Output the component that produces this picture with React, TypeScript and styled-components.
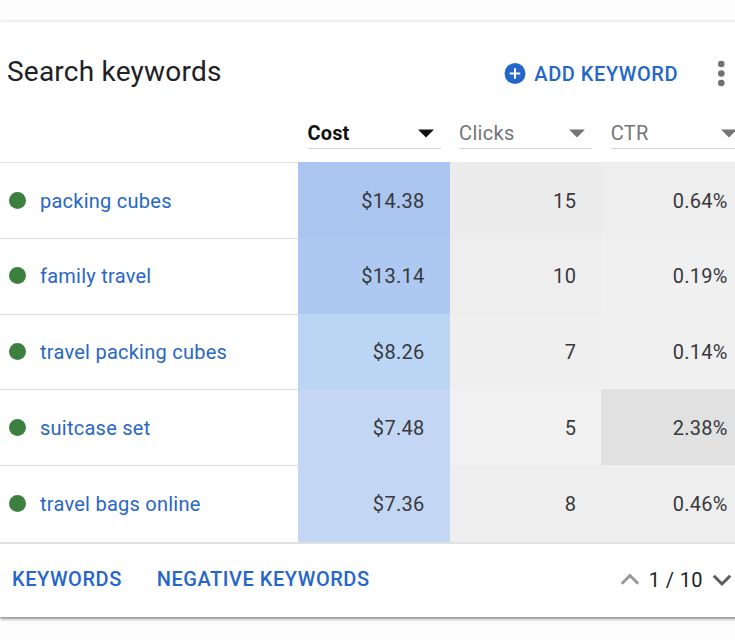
import React from "react";
import styled, { createGlobalStyle } from "styled-components";

const GlobalStyle = createGlobalStyle`
  * { box-sizing: border-box; }
  body { margin: 0; background: #fdfdfd; overflow: hidden; }
`;

const Page = styled.div`
  width: 735px;
  height: 640px;
  padding-top: 22px;
  overflow: hidden;
  font-family: Roboto, "Liberation Sans", sans-serif;
  font-size: 20px;
  letter-spacing: 0.3px;
`;

const Card = styled.section`
  width: 760px;
  height: 595px;
  display: flex;
  flex-direction: column;
  background: #fff;
  box-shadow: 0 0 3px rgba(0, 0, 0, 0.16), 0 2px 3px rgba(0, 0, 0, 0.4);
`;

const Header = styled.header`
  height: 90px;
  flex: none;
  display: flex;
  align-items: center;
  padding: 0 32px 0 7px;
`;

const Title = styled.h2`
  margin: 10px auto 0 0;
  font-size: 28px;
  line-height: 36px;
  font-weight: 400;
  letter-spacing: 0.22px;
  color: #202124;
`;

const TextButton = styled.button`
  border: 0;
  padding: 0;
  background: none;
  display: flex;
  align-items: center;
  font: inherit;
  font-weight: 500;
  line-height: 24px;
  letter-spacing: 0.54px;
  color: #2566ca;
`;

const AddButton = styled(TextButton)`
  margin: 13px 36px 0 0;
  gap: 8px;
`;

const MenuButton = styled(TextButton)`
  margin-top: 13px;
  color: #717171;
`;

const columns = "298px repeat(3, 151.6px)";

const ColumnHeader = styled.div`
  height: 50px;
  flex: none;
  display: grid;
  grid-template-columns: ${columns};
`;

const MetricSelect = styled.div<{ $active?: boolean }>`
  margin: 5px 9px 0 9.5px;
  height: 32px;
  display: flex;
  align-items: center;
  justify-content: space-between;
  padding: 1px 7px 0 0;
  border-bottom: 1px solid #d2d2d2;
  font-weight: ${(p) => (p.$active ? 700 : 400)};
  letter-spacing: ${(p) => (p.$active ? "0.15px" : "0.3px")};
  color: ${(p) => (p.$active ? "#111" : "#757575")};
`;

const Table = styled.div`
  flex: none;
  border-top: 1px solid #dedede;
  border-bottom: 2px solid #dfe0e1;
`;

const Row = styled.div`
  height: 75.8px;
  display: grid;
  grid-template-columns: ${columns};
`;

const KeywordCell = styled.div<{ $first: boolean }>`
  display: flex;
  align-items: center;
  gap: 14.5px;
  padding: 0 0 0.6px 8.5px;
  margin-top: -1px;
  border-top: 1px solid ${(p) => (p.$first ? "transparent" : "#dcdcdc")};
  letter-spacing: 0.25px;
  color: #2866c8;
`;

const StatusDot = styled.span`
  width: 17px;
  height: 17px;
  margin-top: -1px;
  border-radius: 50%;
  background: #3b803f;
`;

const ValueCell = styled.div<{ $fill: string }>`
  display: flex;
  align-items: center;
  justify-content: flex-end;
  padding: 0.4px 25px 0 0;
  margin-top: -1px;
  background: ${(p) => p.$fill};
  color: #37393c;
`;

const Footer = styled.footer`
  flex: 1;
  display: flex;
  align-items: center;
  gap: 35px;
  padding: 0 28px 2px 12px;
`;

const Pager = styled.div`
  margin-left: auto;
  display: flex;
  align-items: center;
  gap: 9px;
  padding-top: 2px;
  letter-spacing: 0.4px;
  color: #1c1c1c;
`;

const Caret = () => (
  <svg width="16" height="9" viewBox="0 0 16 9" fill="currentColor">
    <path d="M0 .5h16L8 8.5z" />
  </svg>
);

const Chevron = ({ up }: { up?: boolean }) => (
  <svg width="20" height="14" viewBox="0 0 20 14" fill="none" stroke={up ? "#999" : "#5c5c5c"} strokeWidth="3">
    <path d={up ? "M1.8 10.7 10 2.5l8.2 8.2" : "M1.8 2.8 10 11l8.2-8.2"} />
  </svg>
);

const rows = [
  { keyword: "packing cubes", cost: "$14.38", clicks: "15", ctr: "0.64%", fills: ["#a9c5f0", "#ececec", "#eeeeee"] },
  { keyword: "family travel", cost: "$13.14", clicks: "10", ctr: "0.19%", fills: ["#adc8f1", "#eeeeee", "#f0f0f0"] },
  { keyword: "travel packing cubes", cost: "$8.26", clicks: "7", ctr: "0.14%", fills: ["#bbd5f5", "#efefef", "#f0f0f0"] },
  { keyword: "suitcase set", cost: "$7.48", clicks: "5", ctr: "2.38%", fills: ["#c3d7f4", "#f1f1f1", "#e1e1e1"] },
  { keyword: "travel bags online", cost: "$7.36", clicks: "8", ctr: "0.46%", fills: ["#c3d7f4", "#eeeeee", "#eeeeee"] },
];

export default function App() {
  return (
    <Page>
      <GlobalStyle />
      <Card>
        <Header>
          <Title>Search keywords</Title>
          <AddButton>
            <svg width="22" height="22" viewBox="0 0 22 22">
              <circle cx="11" cy="10.5" r="10.5" fill="#2566ca" />
              <path d="M11 5.3v10.4M5.8 10.5h10.4" stroke="#fff" strokeWidth="2" />
            </svg>
            ADD KEYWORD
          </AddButton>
          <MenuButton aria-label="More options">
            <svg width="14" height="28" viewBox="0 0 14 28" fill="currentColor">
              <circle cx="7.3" cy="4" r="3.3" />
              <circle cx="7.3" cy="13.5" r="3.3" />
              <circle cx="7.3" cy="23" r="3.3" />
            </svg>
          </MenuButton>
        </Header>
        <ColumnHeader>
          <span />
          <MetricSelect $active>Cost<Caret /></MetricSelect>
          <MetricSelect>Clicks<Caret /></MetricSelect>
          <MetricSelect>CTR<Caret /></MetricSelect>
        </ColumnHeader>
        <Table>
          {rows.map((row, i) => (
            <Row key={row.keyword}>
              <KeywordCell $first={i === 0}>
                <StatusDot />
                {row.keyword}
              </KeywordCell>
              <ValueCell $fill={row.fills[0]}>{row.cost}</ValueCell>
              <ValueCell $fill={row.fills[1]}>{row.clicks}</ValueCell>
              <ValueCell $fill={row.fills[2]}>{row.ctr}</ValueCell>
            </Row>
          ))}
        </Table>
        <Footer>
          <TextButton>KEYWORDS</TextButton>
          <TextButton>NEGATIVE KEYWORDS</TextButton>
          <Pager>
            <Chevron up />
            1 / 10
            <Chevron />
          </Pager>
        </Footer>
      </Card>
    </Page>
  );
}
